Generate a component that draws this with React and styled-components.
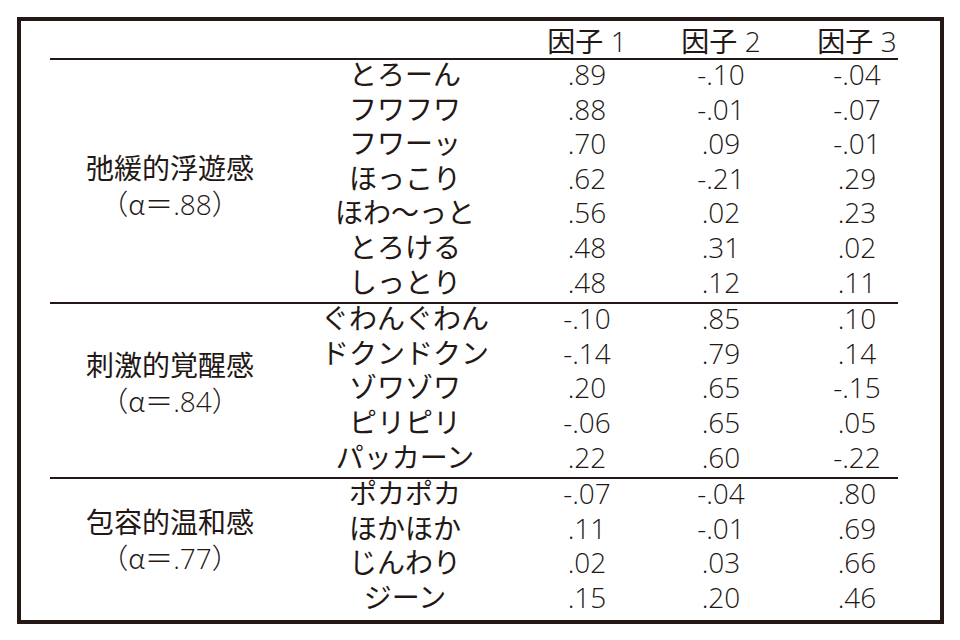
import React from "react";
import styled, { createGlobalStyle } from "styled-components";

const GlobalStyle = createGlobalStyle`
  html, body {
    margin: 0;
    padding: 0;
    background: #ffffff;
  }
  body {
    font-family: "Open Sans", "Noto Sans CJK JP", sans-serif;
    font-weight: 300;
    color: #231815;
  }
`;

const Page = styled.div`
  width: 960px;
  height: 640px;
  padding: 17px;
  box-sizing: border-box;
`;

const Frame = styled.div`
  width: 927px;
  height: 607px;
  box-sizing: border-box;
  border: 4px solid #231815;
  padding-left: 29px;
`;

const Table = styled.div`
  width: 848px;
  font-size: 28px;
`;

const Header = styled.div`
  display: grid;
  grid-template-columns: 240px 230px 134px 134px 110px;
  height: 37px;
  box-sizing: border-box;
  padding-top: 4px;
  line-height: 32px;
`;

const Group = styled.div`
  display: grid;
  grid-template-columns: 240px 1fr;
  border-top: 2px solid #231815;
`;

const Label = styled.div`
  display: flex;
  flex-direction: column;
  justify-content: center;
  align-items: center;
  line-height: 35px;
  white-space: nowrap;
  padding-top: ${(p) => (p.$shift > 0 ? p.$shift * 2 : 0)}px;
  padding-bottom: ${(p) => (p.$shift < 0 ? -p.$shift * 2 : 0)}px;
`;

const Kanji = styled.span`
  font-weight: 400;
`;

const Greek = styled.span`
  font-family: "Noto Sans CJK JP", sans-serif;
  font-weight: 300;
`;

const Rows = styled.div`
  display: flex;
  flex-direction: column;
`;

const Row = styled.div`
  display: grid;
  grid-template-columns: 230px 134px 134px 110px;
  height: 34.6px;
  line-height: 28px;
`;

const Cell = styled.div`
  text-align: center;
  white-space: nowrap;
  font-weight: ${(p) => (p.$cjk ? 400 : 300)};
  padding-left: ${(p) => (p.$last ? 28 : 0)}px;
`;

const groups = [
  {
    name: "弛緩的浮遊感",
    alpha: ".88",
    shift: 5.5,
    items: [
      ["とろーん", ".89", "-.10", "-.04"],
      ["フワフワ", ".88", "-.01", "-.07"],
      ["フワーッ", ".70", ".09", "-.01"],
      ["ほっこり", ".62", "-.21", ".29"],
      ["ほわ〜っと", ".56", ".02", ".23"],
      ["とろける", ".48", ".31", ".02"],
      ["しっとり", ".48", ".12", ".11"],
    ],
  },
  {
    name: "刺激的覚醒感",
    alpha: ".84",
    shift: -7,
    items: [
      ["ぐわんぐわん", "-.10", ".85", ".10"],
      ["ドクンドクン", "-.14", ".79", ".14"],
      ["ゾワゾワ", ".20", ".65", "-.15"],
      ["ピリピリ", "-.06", ".65", ".05"],
      ["パッカーン", ".22", ".60", "-.22"],
    ],
  },
  {
    name: "包容的温和感",
    alpha: ".77",
    shift: -8,
    items: [
      ["ポカポカ", "-.07", "-.04", ".80"],
      ["ほかほか", ".11", "-.01", ".69"],
      ["じんわり", ".02", ".03", ".66"],
      ["ジーン", ".15", ".20", ".46"],
    ],
  },
];

export default function App() {
  return (
    <Page>
      <GlobalStyle />
      <Frame>
        <Table>
          <Header>
            <Cell />
            <Cell />
            <Cell>
              <Kanji>因子</Kanji> 1
            </Cell>
            <Cell>
              <Kanji>因子</Kanji> 2
            </Cell>
            <Cell $last>
              <Kanji>因子</Kanji> 3
            </Cell>
          </Header>
          {groups.map((group) => (
            <Group key={group.name}>
              <Label $shift={group.shift}>
                <Kanji>{group.name}</Kanji>
                <span>
                  （<Greek>α</Greek>＝{group.alpha}）
                </span>
              </Label>
              <Rows>
                {group.items.map((item) => (
                  <Row key={item[0]}>
                    {item.map((value, i) => (
                      <Cell key={i} $cjk={i === 0} $last={i === 3}>
                        {value}
                      </Cell>
                    ))}
                  </Row>
                ))}
              </Rows>
            </Group>
          ))}
        </Table>
      </Frame>
    </Page>
  );
}
